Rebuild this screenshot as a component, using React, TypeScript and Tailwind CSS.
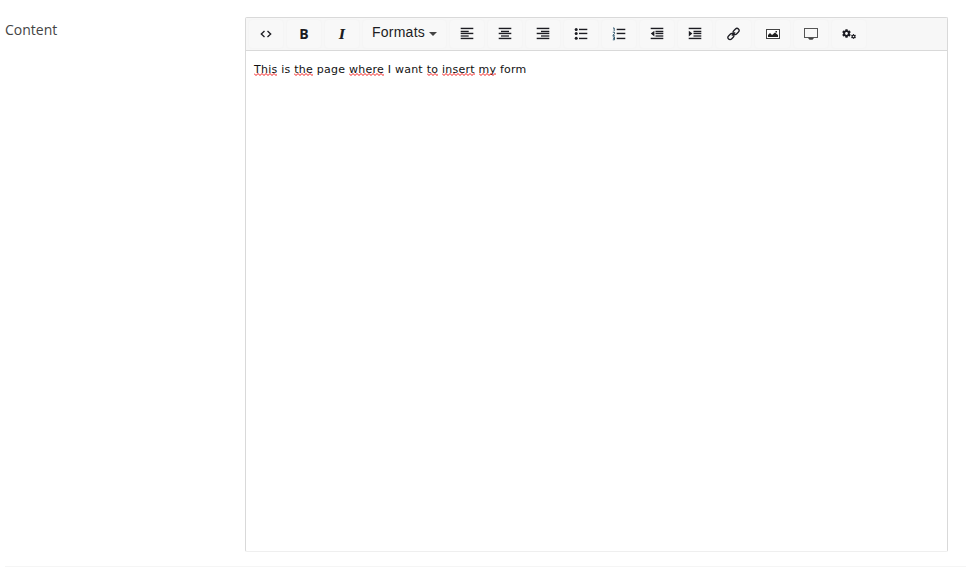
import React from "react";
import { FaCog } from "react-icons/fa";

function ToolButton({ label, children, className = "w-9" }: { label: string; children: React.ReactNode; className?: string }) {
  return (
    <button
      type="button"
      aria-label={label}
      className={`flex h-[30px] shrink-0 items-center justify-center rounded-[4px] border border-[#f5f5f5] bg-[#f8f8f8] text-[#1c1c22] ${className}`}
    >
      {children}
    </button>
  );
}

type Bar = [number, number, number];

/* Horizontal rules given as [x, y, width] on a 14px grid. */
function Bars({ bars, shade, children }: { bars: Bar[]; shade?: Bar; children?: React.ReactNode }) {
  return (
    <svg width="14" height="14" viewBox="0 0 14 14" fill="currentColor">
      {shade && <rect x={shade[0]} y={shade[1]} width={shade[2]} height="2" fill="#6c6c70" />}
      {bars.map(([x, y, w]) => (
        <rect key={`${x}-${y}`} x={x} y={y - 0.25} width={w} height="1.4" />
      ))}
      {children}
    </svg>
  );
}

const words: [string, boolean][] = [
  ["This", true],
  ["is", false],
  ["the", true],
  ["page", false],
  ["where", true],
  ["I", false],
  ["want", false],
  ["to", true],
  ["insert", true],
  ["my", true],
  ["form", false],
];

/* Zigzag with a 4px period, clipped to the width of the word it marks. */
const zigzag = Array.from({ length: 30 }, (_, i) => `${i * 2},${i % 2 ? 2.5 : 0.5}`).join(" ");

function Flagged({ children }: { children: React.ReactNode }) {
  return (
    <span className="relative">
      {children}
      <svg className="absolute bottom-0 left-0 h-[3px] w-full overflow-hidden">
        <polyline points={zigzag} fill="none" stroke="#f00000" strokeWidth="0.9" />
      </svg>
    </span>
  );
}

export default function App() {
  return (
    <div className="h-[568px] w-[966px] overflow-hidden bg-white">
      <div className="ml-[5px] flex h-[567px] items-start border-b border-[#f5f5f5] pt-[17px]">
        <label className="w-[240px] pt-[3px] font-['Open_Sans',sans-serif] text-[14px] leading-5 text-[#444]">Content</label>
        <div className="h-[535px] w-[703px] rounded-[2px] border border-[#d9d9d9] border-b-[#efefef] bg-white">
          <div className="flex h-[33px] items-center gap-[2px] border-b border-[#d9d9d9] bg-[#f7f7f7] pl-[2px]">
            <ToolButton label="Source code">
              <svg width="14" height="14" viewBox="0 0 14 14" fill="none" stroke="currentColor" strokeWidth="1.3">
                <path d="M5.5 4 2.3 7l3.2 3M8.5 4l3.2 3-3.2 3" />
              </svg>
            </ToolButton>
            <ToolButton label="Bold">
              <span className="font-['Open_Sans',sans-serif] text-[14px] font-bold leading-none">B</span>
            </ToolButton>
            <ToolButton label="Italic">
              <span className="font-['DejaVu_Serif',serif] text-[13px] font-bold italic leading-none">I</span>
            </ToolButton>
            <ToolButton label="Formats" className="w-[85px]">
              <span className="pb-[4px] font-['Liberation_Sans',sans-serif] text-[14px] leading-5 tracking-[0.25px]">Formats</span>
              <svg className="ml-1" width="8" height="4" viewBox="0 0 8 4" fill="#444">
                <path d="M0 0h8L4 4z" />
              </svg>
            </ToolButton>
            <ToolButton label="Align left">
              <Bars bars={[[0.7, 1, 12.6], [0.7, 4, 8], [0.7, 6, 12.6], [0.7, 11, 12.6]]} shade={[0.7, 8, 8]} />
            </ToolButton>
            <ToolButton label="Align center">
              <Bars bars={[[0.7, 1, 12.6], [3, 4, 8], [0.7, 6, 12.6], [0.7, 11, 12.6]]} shade={[3, 8, 8]} />
            </ToolButton>
            <ToolButton label="Align right">
              <Bars bars={[[0.7, 1, 12.6], [5, 4, 8.3], [0.7, 6, 12.6], [0.7, 11, 12.6]]} shade={[5, 8, 8.3]} />
            </ToolButton>
            <ToolButton label="Bullet list">
              <Bars bars={[[5, 2, 8.3], [5, 6, 8.3], [5, 11, 8.3]]}>
                <circle cx="2.2" cy="2.4" r="1.5" />
                <circle cx="2.2" cy="6.6" r="1.5" />
                <circle cx="2.2" cy="11.2" r="1.5" />
              </Bars>
            </ToolButton>
            <ToolButton label="Numbered list">
              <Bars bars={[[4.7, 2, 8.6], [4.7, 6, 8.6], [4.7, 11, 8.6]]}>
                <path d="M1 1h1.2v3M.8 5.2h1.7v1.4L.8 8.3h2M.8 9.8h1.7v3H.8M1 11.3h1.5" fill="none" stroke="#345a70" strokeWidth="1" />
              </Bars>
            </ToolButton>
            <ToolButton label="Decrease indent">
              <Bars bars={[[0.7, 1, 12.6], [5.5, 4, 7.8], [5.5, 6, 7.8], [0.7, 11, 12.6]]} shade={[5.5, 8, 7.8]}>
                <path d="M4.4 3.8v5.6L.8 6.6z" />
              </Bars>
            </ToolButton>
            <ToolButton label="Increase indent">
              <Bars bars={[[0.7, 1, 12.6], [5.5, 4, 7.8], [5.5, 6, 7.8], [0.7, 11, 12.6]]} shade={[5.5, 8, 7.8]}>
                <path d="M.8 3.8v5.6l3.6-2.8z" />
              </Bars>
            </ToolButton>
            <ToolButton label="Insert link" className="w-[37px]">
              <svg width="14" height="14" viewBox="0 0 14 14" fill="none" stroke="currentColor" strokeWidth="1.3">
                <g transform="rotate(-45 6.5 7)">
                  <rect x="-.5" y="4.9" width="6.6" height="4.2" rx="2.1" />
                  <rect x="6.9" y="4.9" width="6.6" height="4.2" rx="2.1" />
                  <path d="M4.2 7h4.6" />
                </g>
              </svg>
            </ToolButton>
            <ToolButton label="Insert image" className="w-[37px]">
              <svg width="14" height="14" viewBox="0 0 14 14">
                <rect x=".5" y="2.5" width="13" height="9" fill="white" stroke="#444" />
                <path d="M2 10V8l2-2 2 2 3-2.5L12 8v2z" fill="#222" />
                <rect x="9.5" y="4" width="1.5" height="1.5" fill="#222" />
              </svg>
            </ToolButton>
            <ToolButton label="Preview">
              <svg width="14" height="14" viewBox="0 0 14 14">
                <rect x=".5" y="1.5" width="13" height="9" fill="none" stroke="#555" />
                <path d="M4 11h6l-1.5 1.8h-3z" fill="#444" />
              </svg>
            </ToolButton>
            <ToolButton label="Form settings">
              <span className="flex items-end pb-px pr-px">
                <FaCog size={9} />
                <FaCog className="-mb-px" size={5} />
              </span>
            </ToolButton>
          </div>
          <p className="px-2 pt-[11px] font-['DejaVu_Sans',Verdana,sans-serif] text-[11px] leading-4 tracking-[0.24px] text-[#111]">
            {words.map(([word, flagged], i) => (
              <React.Fragment key={word}>
                {i > 0 && " "}
                {flagged ? <Flagged>{word}</Flagged> : word}
              </React.Fragment>
            ))}
          </p>
        </div>
      </div>
    </div>
  );
}
